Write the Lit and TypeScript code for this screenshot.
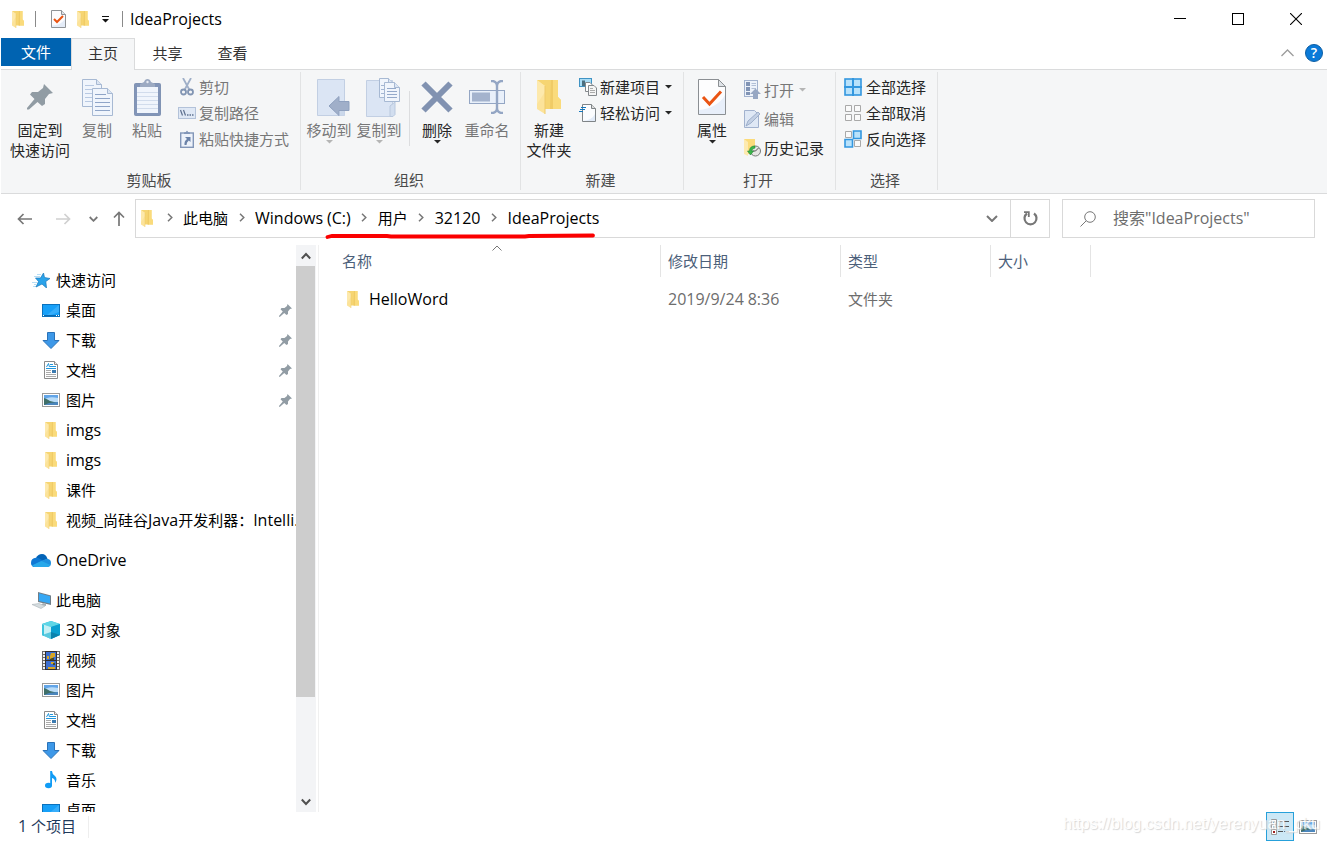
import { LitElement, html, css, svg, TemplateResult } from "lit";
import { customElement, property, state } from "lit/decorators.js";
import { classMap } from "lit/directives/class-map.js";

type Art = { w: number; h: number; box: string; body: unknown };

const folderBody = svg`
  <path d="M0 0H21V17L24 20V29H8L0 20Z" fill="#f6d572"/>
  <path d="M14 0H21V17L24 20V29H14Z" fill="#fadb7c"/>
  <path d="M14 0H16V29H13Z" fill="#f0cb66"/>
  <path d="M0 0L8 6V34L0 29Z" fill="#fce39a"/>
  <path d="M0 0L8 6V12L0 24Z" fill="#fde9ac"/>
  <path d="M8 6V34" stroke="#efca6b" stroke-width="1" fill="none"/>`;

const pinBody = svg`<path d="M17 0L26 9L22 10L18 15V20L15 22L10.5 18L2 25.5H0V24L7.5 15L3 10.5L5 8H11L16 4Z" fill="#919ca4"/>`;

const pictureBody = svg`
  <rect x=".5" y=".5" width="17" height="13" fill="#fff" stroke="#9b9b9b"/>
  <rect x="2" y="2" width="14" height="10" fill="#62a5e8"/>
  <path d="M2 7Q6 3 16 5V9H2Z" fill="#b9dcf8"/>
  <path d="M2 5Q5 6 8 8L16 10V12H2Z" fill="#3f6f68"/>
  <path d="M7 10L16 9V12H2Z" fill="#4b86bd"/>`;

const shortPage = (x: number, y: number, w: number, h: number) => svg`
  <path d="M${x + 0.5} ${y + 0.5}h${w - 6}l5 5v${h - 6}h-${w - 1}z" fill="#f0f5fc" stroke="#a7b9d3"/>
  <path d="M${x + w - 5.5} ${y + 0.5}v5h5" fill="#dbe5f3" stroke="#a7b9d3"/>`;

const art: Record<string, Art> = {
  folder: { w: 12, h: 17, box: "0 0 24 34", body: folderBody },
  folderBig: { w: 24, h: 35, box: "0 0 24 35", body: folderBody },
  pin: { w: 13, h: 13, box: "0 0 26 26", body: pinBody },
  pinBig: { w: 26, h: 26, box: "0 0 26 26", body: pinBody },
  check: {
    w: 15, h: 18, box: "0 0 15 18", body: svg`
      <path d="M.5 .5H10.500L14.500 4.500V17.500H.5Z" fill="#fcfcfe" stroke="#8f9397"/>
      <path d="M14 9V17H1V15.500Q10 15 14 9Z" fill="#e4ecf8"/>
      <path d="M10.500 .5V4.500H14.500" fill="#dfe3e8" stroke="#8f9397"/>
      <path d="M3 9L6 12L12 6" fill="none" stroke="#ea5413" stroke-width="2"/>`,
  },
  checkBig: {
    w: 28, h: 36, box: "0 0 28 36", body: svg`
      <path d="M.5 .5H20.500L27.500 7.500V35.500H.5Z" fill="#fdfdfe" stroke="#8b8f93"/>
      <path d="M27 16V35H1V31C12 30 22 25 27 16Z" fill="#e8effa"/>
      <path d="M20.500 .5V7.500H27.500Z" fill="#dfe3e8" stroke="#8b8f93"/>
      <path d="M5 18L11.500 25L23 12.500" fill="none" stroke="#ea5413" stroke-width="3"/>`,
  },
  picture: { w: 18, h: 14, box: "0 0 18 14", body: pictureBody },
  custom: { w: 7, h: 7, box: "0 0 7 7", body: svg`<path d="M0 0H7V1H0ZM0 3H7L3.500 6.500Z" fill="#111"/>` },
  down: { w: 7, h: 4, box: "0 0 7 4", body: svg`<path d="M0 0H7L3.500 3.500Z" fill="currentColor"/>` },
  min: { w: 12, h: 12, box: "0 0 12 12", body: svg`<path d="M0 5.500H12" stroke="#000"/>` },
  max: { w: 12, h: 12, box: "0 0 12 12", body: svg`<rect x=".5" y=".5" width="11" height="11" fill="none" stroke="#000"/>` },
  close: { w: 12, h: 12, box: "0 0 12 12", body: svg`<path d="M0 0L12 12M12 0L0 12" stroke="#000" stroke-width="1.100"/>` },
  collapse: { w: 13, h: 8, box: "0 0 13 8", body: svg`<path d="M.5 7L6.500 1L12.500 7" stroke="#9c9c9c" stroke-width="1.300" fill="none"/>` },
  copy: {
    w: 31, h: 37, box: "0 0 31 37", body: svg`${shortPage(0, 0, 20, 28)}
      <path d="M3 6.500H12M3 10.500H11M3 14.500H10M3 18.500H10M3 22.500H10" stroke="#b8c9e2"/>
      ${shortPage(10, 9, 21, 28)}
      <path d="M13 15.500H24M13 19.500H28M13 23.500H28M13 27.500H28M13 31.500H28" stroke="#8fa5c8"/>`,
  },
  paste: {
    w: 27, h: 37, box: "0 0 27 37", body: svg`
      <rect x=".5" y="4.500" width="26" height="32" rx="1" fill="#8295b8" stroke="#8093b3"/>
      <rect x="3" y="8" width="21" height="26" fill="#f0f5fc"/>
      <path d="M3 13.500H24M3 17.500H24M3 21.500H24M3 25.500H24M3 29.500H24" stroke="#d1dcec"/>
      <path d="M6 8V5L10 3Q11 0 13.500 0T17 3L21 5V8Z" fill="#9caac2"/>
      <circle cx="13.500" cy="3" r="1.200" fill="#e6ebf3"/>`,
  },
  cut: {
    w: 14, h: 18, box: "0 0 14 18", body: svg`
      <path d="M3 0L9.500 12M11 0L4.500 12" stroke="#9fafc8" stroke-width="1.800" fill="none"/>
      <circle cx="3.500" cy="14" r="2.500" fill="none" stroke="#8295b3" stroke-width="1.800"/>
      <circle cx="10.500" cy="14" r="2.500" fill="none" stroke="#8295b3" stroke-width="1.800"/>`,
  },
  path: {
    w: 18, h: 12, box: "0 0 18 12", body: svg`
      <rect x=".5" y=".5" width="17" height="11" fill="#dfe8f5" stroke="#b3c2d9"/>
      <path d="M2.500 3L4.500 8.500M5.500 3L7.500 8.500" stroke="#5f7190" stroke-width="1.200"/>
      <path d="M9 8H10.500M11.500 8H13M14 8H15.500" stroke="#5f7190" stroke-width="1.500"/>`,
  },
  shortcut: {
    w: 14, h: 18, box: "0 0 14 18", body: svg`
      <rect x=".7" y="3" width="12.600" height="14.300" fill="#edf2fa" stroke="#8296b8" stroke-width="1.400"/>
      <path d="M4 4V2.500L6 2Q7 -.5 8 2L10 2.500V4Z" fill="#8296b8"/>
      <path d="M5 7H10.500V12L8.800 10.500Q6.500 12 6.500 15H4.500Q4 11 7 9Z" fill="#6b82a8"/>`,
  },
  move: {
    w: 41, h: 37, box: "-8 0 41 37", body: svg`
      <path d="M.5 .5H27.500V36.500H.5Z" fill="#dbe5f4" stroke="#c2cfe3"/>
      <path d="M27.500 21V36.500H23Q23 24 27.500 21Z" fill="#cbd8eb"/>
      <path d="M12 27L22 17.500V22.500H32V31.500H22V36.500Z" fill="#a0afc9" stroke="#8fa1bf"/>`,
  },
  copyto: {
    w: 42, h: 39, box: "-8 0 42 39", body: svg`
      <path d="M.5 2.500H26.500V38.500H.5Z" fill="#dbe5f4" stroke="#c2cfe3"/>
      <path d="M24 38.500V28L29 24V36.500L27 38.500Z" fill="#d2deef" stroke="#b9c8de"/>
      ${shortPage(13, 0, 15, 20)}<path d="M15 7.500H20M15 11.500H20M15 15.500H20" stroke="#a4b7d4"/>
      ${shortPage(18, 4, 16, 20)}<path d="M21 10.500H30M21 13.500H31M21 16.500H31M21 19.500H31" stroke="#94a9ca"/>`,
  },
  delete: { w: 32, h: 32, box: "0 0 32 32", body: svg`<path d="M2.500 2.500L29.500 29.500M29.500 2.500L2.500 29.500" stroke="#8192b1" stroke-width="6"/>` },
  rename: {
    w: 36, h: 34, box: "0 0 36 34", body: svg`
      <rect x=".5" y="10.500" width="35" height="13" fill="#e9f0fa" stroke="#94a6c4"/>
      <rect x="3" y="12.500" width="18" height="9" fill="#a4b3cd"/>
      <path d="M22 1H24Q28 2 28 6Q28 2 32 1H34M22 33H24Q28 32 28 28Q28 32 32 33H34M28 5V29" fill="none" stroke="#94a6c4" stroke-width="2.400"/>`,
  },
  newitem: {
    w: 18, h: 18, box: "0 0 18 18", body: svg`
      <rect x=".5" y=".5" width="12" height="8" fill="#a9dcf5" stroke="#3f93c4"/>
      <path d="M3 2.500H6V8H3Z" fill="#4c6f80"/>
      <path d="M6.500 4.500H11L13.500 7V13.500H6.500Z" fill="#fff" stroke="#85898d"/>
      <path d="M9.500 7.500H15L17.500 10V17.500H9.500Z" fill="#f5f5f5" stroke="#85898d"/>
      <path d="M11 10.500H14M11 12.500H16M11 14.500H16" stroke="#aaa"/>`,
  },
  easy: {
    w: 18, h: 18, box: "0 0 18 18", body: svg`
      <path d="M3.500 .5H12.500L16.500 4.500V17.500H3.500Z" fill="#fbfcfe" stroke="#7f8487"/>
      <path d="M12.500 .5V4.500H16.500" fill="#ddd" stroke="#7f8487"/>
      <path d="M16 10V17H4Q13 16 16 10Z" fill="#e2ebf8"/>
      <path d="M2 3.500H7M1 5.500H6M0 7.500H4" stroke="#1377bd"/>`,
  },
  open: {
    w: 17, h: 19, box: "0 0 17 19", body: svg`
      <rect x=".5" y=".5" width="13" height="16" fill="#edf2fa" stroke="#a2b2ce"/>
      <path d="M2 2H6V6H2ZM2 7H6V11H2ZM2 12H6V15H2Z" fill="#8194b5"/>
      <path d="M7.500 3.500H12M7.500 5.500H12M7.500 8.500H12" stroke="#b1bfd6"/>
      <path d="M11.500 8.500L17 14H14V19H9V14H6Z" fill="#97a7c3"/>`,
  },
  edit: {
    w: 17, h: 18, box: "0 0 17 18", body: svg`
      <path d="M.5 .5H10.500L14.500 4.500V17.500H.5Z" fill="#dfe8f5" stroke="#a2b2ce"/>
      <path d="M2 16L4 11L14 2L16 4L7 13Z" fill="#c3d0e4" stroke="#92a5c3" stroke-width=".8"/>`,
  },
  history: {
    w: 17, h: 18, box: "0 0 17 18", body: svg`
      <path d="M0 0H11V15H4L0 12Z" fill="#fbdb7a"/><path d="M0 0L4 3V17L0 15Z" fill="#fdeab0"/>
      <circle cx="11.500" cy="12" r="5" fill="#e6e6e3" stroke="#777b78"/>
      <path d="M11.500 12L14.500 9M11.500 12H8.500" stroke="#555"/>
      <path d="M11 7Q5.500 7 5.500 12H3.500L6.500 16L9.500 12H7.500Q8 9.500 11 9Z" fill="#3db54a" stroke="#218a32" stroke-width=".6"/>`,
  },
  selAll: {
    w: 18, h: 18, box: "0 0 18 18", body: svg`
      <rect x="1" y="1" width="16" height="16" fill="#b9e2fb" stroke="#3397df" stroke-width="1.600"/>
      <path d="M9 0V18M0 9H18" stroke="#3397df" stroke-width="2"/>`,
  },
  selNone: {
    w: 18, h: 18, box: "0 0 18 18", body: svg`
      <path d="M1.500 1.500H7.500V7.500H1.500ZM10.500 1.500H16.500V7.500H10.500ZM1.500 10.500H7.500V16.500H1.500ZM10.500 10.500H16.500V16.500H10.500Z" fill="#fafafa" stroke="#a9a9a9"/>`,
  },
  selInv: {
    w: 18, h: 18, box: "0 0 18 18", body: svg`
      <path d="M1.500 1.500H7.500V7.500H1.500ZM10.500 10.500H16.500V16.500H10.500Z" fill="#fafafa" stroke="#a9a9a9"/>
      <path d="M9.500 1H17V8.500H9.500ZM1 9.500H8.500V17H1Z" fill="#b9e2fb" stroke="#3397df" stroke-width="1.600"/>`,
  },
  back: { w: 15, h: 12, box: "0 0 15 12", body: svg`<path d="M15 6H1.500M6.500 1L1.500 6L6.500 11" stroke="#777" stroke-width="1.700" fill="none"/>` },
  forward: { w: 15, h: 12, box: "0 0 15 12", body: svg`<path d="M0 6H13.500M8.500 1L13.500 6L8.500 11" stroke="#d0d0d0" stroke-width="1.700" fill="none"/>` },
  recent: { w: 9, h: 6, box: "0 0 9 6", body: svg`<path d="M.7 1L4.500 4.800L8.300 1" stroke="#777" stroke-width="1.800" fill="none"/>` },
  up: { w: 12, h: 15, box: "0 0 12 15", body: svg`<path d="M6 15V1.500M1 6.500L6 1.500L11 6.500" stroke="#777" stroke-width="1.700" fill="none"/>` },
  crumb: { w: 6, h: 9, box: "0 0 6 9", body: svg`<path d="M1 .7L4.800 4.500L1 8.300" stroke="#777" stroke-width="1.500" fill="none"/>` },
  drop: { w: 12, h: 7, box: "0 0 12 7", body: svg`<path d="M1 1L6 6L11 1" stroke="#777" stroke-width="2" fill="none"/>` },
  refresh: {
    w: 15, h: 15, box: "0 0 15 15", body: svg`
      <path d="M11 2.500A6 6 0 1 1 4 2.500" stroke="#777" stroke-width="2.200" fill="none"/>
      <path d="M1 1.200H5.800V6" stroke="#777" stroke-width="1.800" fill="none"/>`,
  },
  search: {
    w: 16, h: 16, box: "0 0 16 16", body: svg`
      <circle cx="10" cy="6" r="5.300" stroke="#777" fill="none"/><path d="M6.200 9.800L.5 15.500" stroke="#777"/>`,
  },
  scrollUp: { w: 10, h: 8, box: "0 0 10 8", body: svg`<path d="M.8 6.500L5 2L9.200 6.500" stroke="#505050" stroke-width="2" fill="none"/>` },
  scrollDown: { w: 10, h: 8, box: "0 0 10 8", body: svg`<path d="M.8 1.500L5 6L9.200 1.500" stroke="#505050" stroke-width="2" fill="none"/>` },
  sort: { w: 10, h: 6, box: "0 0 10 6", body: svg`<path d="M.5 5.500L5 1L9.500 5.500" stroke="#777" fill="none"/>` },
  star: {
    w: 18, h: 15, box: "0 0 18 15", body: svg`
      <path d="M5 1.500H9M2 3.500H8M0 9.500H5M2 11.500H4M1 13.500H4" stroke="#a5d5f2" stroke-width=".8"/>
      <path d="M11.500 0L12.500 4.500L18 5.500L13.800 8.500L14.500 15L10 11L4 14L6.500 8.500L3.500 5L8.500 5Z" fill="#2aa3ea" stroke="#1877ba" stroke-width=".7"/>`,
  },
  desktop: {
    w: 18, h: 13, box: "0 0 18 13", body: svg`
      <rect x=".5" y=".5" width="17" height="12" fill="#17a0f8" stroke="#0b72bd"/>
      <path d="M17 1V8L9 11H5Z" fill="#37aefb"/>
      <path d="M1 11H17V12H1Z" fill="#0869b0"/><path d="M1 11.500H2M14 11.500H15M16 11.500H17" stroke="#fff"/>`,
  },
  download: { w: 18, h: 17, box: "0 0 18 17", body: svg`<path d="M5.500 .5H12.500V8.500H17L9 16.500L1 8.500H5.500Z" fill="#3d98e8" stroke="#2a72b8"/>` },
  document: {
    w: 14, h: 18, box: "0 0 14 18", body: svg`
      <path d="M.5 .5H10.500L13.500 3.500V17.500H.5Z" fill="#fff" stroke="#8a8a8a"/>
      <path d="M10.500 .5V3.500H13.500" fill="#eee" stroke="#8a8a8a"/>
      <path d="M2.500 6L4.500 2.500L5.500 6M6 3.500H9M6 5.500H12M2 7.500H12" stroke="#2196dc" fill="none"/>
      <path d="M8 9H12V12H8Z" fill="#3c7ab0"/><path d="M2 9.500H7M2 11.500H7M2 13.500H12M2 15.500H12" stroke="#aaa"/>`,
  },
  onedrive: {
    w: 20, h: 13, box: "0 0 20 13", body: svg`
      <path d="M5 4Q7 0 11 0T16.500 5L9 8Z" fill="#0364b8"/>
      <path d="M0 9Q0 4 5 3.700Q8 3.500 12 7L3 13Q0 12 0 9Z" fill="#0f78d4"/>
      <path d="M16 4.800Q20 5.200 20 9Q20 13 16 13H3.500Q1.500 12.500 1 11.500L11 6.500Z" fill="#1e90df"/>
      <path d="M1 11.500L10.500 7L19.500 11Q18 13 16 13H3.500Z" fill="#28a8ea"/>`,
  },
  computer: {
    w: 19, h: 17, box: "0 0 19 17", body: svg`
      <path d="M6 0L19 3.500V13L6 10Z" fill="#6f7d88"/><path d="M7 1.200L18 4.300V11.500L7 9Z" fill="#36a8f5"/>
      <path d="M11 11L14 12V14L9 13Z" fill="#a5afb5"/>
      <path d="M0 12.500L7 11.500L13 14L9 16.500Z" fill="#d5dcdf" stroke="#aab4b9" stroke-width=".6"/>`,
  },
  cube: {
    w: 18, h: 18, box: "0 0 18 18", body: svg`
      <path d="M9 0L18 3V14L9 18L0 14V3Z" fill="#27b5d8"/><path d="M0 3L9 0L18 3L9 6Z" fill="#5ed6e6"/>
      <path d="M0 3L9 6V18L0 14Z" fill="#c5f0f5"/><path d="M9 6L18 3V14L9 18Z" fill="#0a9fd0"/>
      <path d="M0 14L9 11V18Z" fill="#2cb8d6" opacity=".7"/><path d="M9 11L18 14L9 18Z" fill="#0b6f96" opacity=".6"/>
      <path d="M0 3L2 4V15L0 14Z" fill="#3cc4dd"/>`,
  },
  video: {
    w: 18, h: 19, box: "0 0 18 19", body: svg`
      <path d="M0 0H18V19H0Z" fill="#6d6967"/>
      <path d="M2 1V19M16 1V19" stroke="#f2f2f2" stroke-width="2" stroke-dasharray="2 1"/>
      <path d="M3 0H15V19H3Z" fill="#33302f"/>
      <path d="M4 1H14V9H4ZM4 10H14V18H4Z" fill="#3d6fd0"/>
      <path d="M9 2H13V6H11V8H8V5ZM5 5H7V8H5ZM9 11H12V13H9ZM6 16H13V18H6Z" fill="#d7a625"/>
      <path d="M10 7H12V9H8V8ZM11 12H13V14H11Z" fill="#4a4a26"/>`,
  },
  music: {
    w: 12, h: 18, box: "0 0 12 18", body: svg`
      <ellipse cx="3.500" cy="14.500" rx="3.500" ry="2.800" fill="#119cf5"/>
      <path d="M5.200 0H7Q7 3 10 5Q13 8 10 12Q10.500 8 7 7V14.500H5.200Z" fill="#119cf5"/>`,
  },
  details: {
    w: 18, h: 16, box: "0 0 18 16", body: svg`
      <path d="M.5 .5H5.500V15.500H.5ZM.5 5.500H5.500M.5 10.500H5.500" fill="#fff" stroke="#999"/>
      <path d="M2 2H4V4H2ZM2 7H4V9H2Z" fill="#587486"/><path d="M2 12H4V14H2Z" fill="#a02020"/>
      <path d="M7 2.500H12M13 2.500H18M7 7.500H12M13 7.500H18M7 12.500H12M13 12.500H18" stroke="#555"/>`,
  },
};

const icon = (name: string): TemplateResult => {
  const a = art[name];
  return html`<svg class="icon" width=${a.w} height=${a.h} viewBox=${a.box} aria-hidden="true">${a.body}</svg>`;
};

/** Splits a label so that its Latin runs take the slightly larger Latin size. */
const label = (text: string) =>
  text.split(/([\x21-\x7e]+)/).map((part) => (/^[\x21-\x7e]/.test(part) ? html`<span class="latin">${part}</span>` : part));

interface NavItem { icon: string; text: string; root?: boolean; pinned?: boolean; gap?: boolean }

const navItems: NavItem[] = [
  { icon: "star", text: "快速访问", root: true },
  { icon: "desktop", text: "桌面", pinned: true },
  { icon: "download", text: "下载", pinned: true },
  { icon: "document", text: "文档", pinned: true },
  { icon: "picture", text: "图片", pinned: true },
  { icon: "folder", text: "imgs" },
  { icon: "folder", text: "imgs" },
  { icon: "folder", text: "课件" },
  { icon: "folder", text: "视频_尚硅谷Java开发利器：Intelli." },
  { icon: "onedrive", text: "OneDrive", root: true, gap: true },
  { icon: "computer", text: "此电脑", root: true, gap: true },
  { icon: "cube", text: "3D 对象" },
  { icon: "video", text: "视频" },
  { icon: "picture", text: "图片" },
  { icon: "document", text: "文档" },
  { icon: "download", text: "下载" },
  { icon: "music", text: "音乐" },
  { icon: "desktop", text: "桌面" },
];

const shared = css`
  :host { font-family: "Open Sans", "Noto Sans CJK SC", sans-serif; font-size: 15px; line-height: 20px; }
  * { box-sizing: border-box; }
  .latin { font-size: 16px; }
  .icon { display: block; flex: none; }
  button { font: inherit; color: inherit; background: none; border: 0; padding: 0; margin: 0; }
`;

@customElement("ribbon-bar")
class RibbonBar extends LitElement {
  static styles = [shared, css`
    :host { display: flex; background: #f5f6f7; border-bottom: 1px solid #dadbdc; padding: 2px 0 3px; color: #262626; overflow: hidden; }
    .group { display: flex; flex-direction: column; flex: none; border-right: 1px solid #e2e3e4; }
    .tools { display: flex; height: 98px; padding: 2px 11px 0 3px; }
    .clipboard { padding-left: 7px; }
    .organize { padding-right: 8px; }
    .select { padding-left: 8px; }
    .caption { text-align: center; padding-right: 3px; color: #4a4a4a; }
    .big { width: 50px; display: flex; flex-direction: column; align-items: center; white-space: nowrap; }
    .wide { width: 64px; }
    .art { height: 46px; display: flex; align-items: center; }
    .small { display: flex; align-items: center; height: 26px; gap: 3px; white-space: nowrap; }
    .glyph { width: 18px; display: flex; justify-content: center; }
    .small > .icon { margin-left: 2px; }
    .list { display: flex; flex-direction: column; margin-left: 6px; }
    .new .list { margin-left: 5px; }
    .select .list { margin-left: 0; }
    .select .small { gap: 4px; }
    .loose { padding-top: 1px; }
    .loose .small { height: 29px; }
    button:disabled { color: #777; }
    button:disabled > .icon { color: #b5b5b5; }
    .rule { width: 1px; height: 55px; margin: 17px 2px 0 5px; background: #dcdddf; }
  `];

  private big(name: string, lines: string[], opts: { off?: boolean; menu?: boolean; wide?: boolean } = {}) {
    return html`<button class=${classMap({ big: true, wide: !!opts.wide })} ?disabled=${!!opts.off}>
      <span class="art">${icon(name)}</span>${lines.map((l) => html`<span>${l}</span>`)}${opts.menu ? icon("down") : ""}
    </button>`;
  }

  private small(name: string, text: string, opts: { off?: boolean; menu?: boolean } = {}) {
    return html`<button class="small" ?disabled=${!!opts.off}>
      <span class="glyph">${icon(name)}</span><span>${text}</span>${opts.menu ? icon("down") : ""}
    </button>`;
  }

  render() {
    return html`
      <div class="group">
        <div class="tools clipboard">
          ${this.big("pinBig", ["固定到", "快速访问"], { wide: true })}
          ${this.big("copy", ["复制"], { off: true })}
          ${this.big("paste", ["粘贴"], { off: true })}
          <div class="list">
            ${this.small("cut", "剪切", { off: true })}
            ${this.small("path", "复制路径", { off: true })}
            ${this.small("shortcut", "粘贴快捷方式", { off: true })}
          </div>
        </div>
        <div class="caption">剪贴板</div>
      </div>
      <div class="group">
        <div class="tools organize">
          ${this.big("move", ["移动到"], { off: true, menu: true })}
          ${this.big("copyto", ["复制到"], { off: true, menu: true })}
          <div class="rule"></div>
          ${this.big("delete", ["删除"], { menu: true })}
          ${this.big("rename", ["重命名"], { off: true })}
        </div>
        <div class="caption">组织</div>
      </div>
      <div class="group">
        <div class="tools new">
          ${this.big("folderBig", ["新建", "文件夹"])}
          <div class="list">
            ${this.small("newitem", "新建项目", { menu: true })}
            ${this.small("easy", "轻松访问", { menu: true })}
          </div>
        </div>
        <div class="caption">新建</div>
      </div>
      <div class="group">
        <div class="tools">
          ${this.big("checkBig", ["属性"], { menu: true })}
          <div class="list loose">
            ${this.small("open", "打开", { off: true, menu: true })}
            ${this.small("edit", "编辑", { off: true })}
            ${this.small("history", "历史记录")}
          </div>
        </div>
        <div class="caption">打开</div>
      </div>
      <div class="group">
        <div class="tools select">
          <div class="list">
            ${this.small("selAll", "全部选择")}
            ${this.small("selNone", "全部取消")}
            ${this.small("selInv", "反向选择")}
          </div>
        </div>
        <div class="caption">选择</div>
      </div>`;
  }
}

@customElement("nav-tree")
class NavTree extends LitElement {
  @property({ attribute: false }) items: NavItem[] = [];

  static styles = [shared, css`
    :host { display: flex; min-height: 0; overflow: hidden; color: #000; }
    .tree { flex: 1; min-width: 0; overflow: hidden; padding: 20px 0 0 30px; margin: 0; list-style: none; }
    .row a { display: flex; align-items: center; height: 30px; padding-left: 10px; color: inherit; text-decoration: none; white-space: nowrap; }
    .root a { padding-left: 0; }
    .gap { margin-top: 10px; }
    .glyph { width: 20px; margin-right: 5px; display: flex; justify-content: center; flex: none; }
    .text { flex: 1; min-width: 0; }
    .pin { padding-right: 4px; }
    .bar { width: 20px; display: flex; flex-direction: column; background: #f3f4f6; }
    .arrow { height: 21px; display: flex; align-items: center; justify-content: center; }
    .track { flex: 1; padding-right: 1px; }
    .thumb { height: 82%; background: #cdcdcd; }
  `];

  render() {
    return html`
      <ul class="tree">
        ${this.items.map((i) => html`
          <li class=${classMap({ row: true, root: !!i.root, gap: !!i.gap })}>
            <a href="#"><span class="glyph">${icon(i.icon)}</span><span class="text">${label(i.text)}</span>${i.pinned ? html`<span class="pin">${icon("pin")}</span>` : ""}</a>
          </li>`)}
      </ul>
      <div class="bar">
        <button class="arrow" aria-label="向上">${icon("scrollUp")}</button>
        <div class="track"><div class="thumb"></div></div>
        <button class="arrow" aria-label="向下">${icon("scrollDown")}</button>
      </div>`;
  }
}

@customElement("app-root")
class AppRoot extends LitElement {
  @state() private tab = "主页";

  static styles = [shared, css`
    :host { display: flex; flex-direction: column; height: 100vh; background: #fff; padding: 0 1px; overflow: hidden; color: #000; position: relative; }
    .title { display: flex; align-items: center; height: 38px; padding: 0 2px 0 11px; }
    .quick { display: flex; align-items: center; height: 18px; }
    .bar { width: 1px; height: 16px; background: #8a8a8a; }
    .q1 { margin: 0 15px 0 11px; }
    .q2 { margin: 0 7px 0 13px; }
    .quick .f2 { margin: 0 13px 0 11px; }
    .heading { flex: 1; margin: 0; font-size: 16px; font-weight: 400; }
    .win { width: 58px; height: 38px; display: flex; align-items: center; justify-content: center; }
    .tabs { display: flex; height: 32px; border-bottom: 1px solid #dadbdc; color: #333; }
    .tab { width: 65px; height: 30px; padding-bottom: 2px; border: 1px solid transparent; border-bottom: 0; }
    .file { width: 70px; height: 28px; background: #0063b1; color: #fff; }
    .on { width: 64px; height: 32px; padding-bottom: 4px; background: #f5f6f7; border-color: #dadbdc; }
    .help { margin-left: auto; display: flex; align-items: center; gap: 11px; padding-right: 4px; height: 30px; }
    .q { width: 18px; height: 18px; border-radius: 50%; border: 1px solid #0d5ea3; background: #0b7ad8; color: #fff; font-size: 14px; line-height: 16px; font-weight: 600; }
    .address { display: flex; align-items: center; padding: 5px 12px 7px 16px; }
    .nav { display: flex; align-items: center; width: 118px; flex: none; }
    .nav button { display: flex; }
    .fwd { margin: 0 18px 0 24px; }
    .up { margin-left: 15px; }
    .path { flex: 1; min-width: 0; display: flex; align-items: center; height: 39px; border: 1px solid #d9d9d9; padding-left: 5px; position: relative; }
    .crumbs { flex: 1; display: flex; align-items: center; list-style: none; margin: 0; padding: 0 0 2px 3px; white-space: nowrap; overflow: hidden; }
    .crumbs li { display: flex; align-items: center; }
    .crumbs a { color: inherit; text-decoration: none; }
    .sep { width: 27px; display: flex; justify-content: center; }
    .drop { width: 36px; display: flex; justify-content: center; }
    .refresh { width: 39px; height: 37px; border-left: 1px solid #d9d9d9; display: flex; align-items: center; justify-content: center; }
    .mark { position: absolute; left: 189px; bottom: -2px; }
    .search { width: 253px; height: 39px; margin-left: 12px; border: 1px solid #d9d9d9; display: flex; align-items: center; padding-left: 17px; gap: 17px; }
    .search input { flex: 1; min-width: 0; border: 0; outline: 0; padding: 0 0 2px; font: inherit; font-size: 16px; background: none; }
    .search input::placeholder { color: #6d6d6d; opacity: 1; }
    .body { flex: 1; min-height: 0; display: grid; grid-template-columns: 315px 1fr; }
    .main { margin-left: 2px; border-left: 1px solid #f0f0f0; position: relative; }
    .files { border-collapse: separate; border-spacing: 0; table-layout: fixed; width: 772px; text-align: left; color: #6d6d6d; }
    .files th { height: 32px; font-weight: 400; color: #4c607a; padding: 0 0 0 7px; border-right: 1px solid #e4e4e4; }
    .files th:first-child { padding-left: 23px; }
    .c1 { width: 342px; } .c2 { width: 180px; } .c3 { width: 150px; } .c4 { width: 100px; }
    .files td { padding: 7px 0 0 7px; height: 37px; }
    .files td:first-child { padding-left: 28px; color: #000; }
    .name { display: flex; align-items: center; gap: 10px; }
    .sort { position: absolute; left: 173px; top: 0; }
    .status { height: 30px; display: flex; align-items: center; padding: 0 5px 0 17px; color: #1e395b; }
    .count { padding: 0 12px 2px 0; border-right: 1px solid #eee; }
    .views { margin-left: auto; display: flex; align-items: center; }
    .view { width: 28px; height: 29px; display: flex; align-items: center; justify-content: center; margin-bottom: 1px; }
    .picked { background: #cce8f6; border: 1px solid #26a0da; }
    .watermark { position: absolute; right: 8px; bottom: 8px; font-family: "Liberation Sans", sans-serif; font-size: 16px; color: #fff; text-shadow: 1px 1px 1px #ccc; pointer-events: none; opacity: .8; }
  `];

  render() {
    const crumbs = ["此电脑", "Windows (C:)", "用户", "32120", "IdeaProjects"];
    return html`
      <header class="title">
        <div class="quick">
          ${icon("folder")}<span class="bar q1"></span>
          ${icon("check")}<span class="f2">${icon("folder")}</span>${icon("custom")}
          <span class="bar q2"></span>
        </div>
        <h1 class="heading">IdeaProjects</h1>
        <button class="win" aria-label="最小化">${icon("min")}</button>
        <button class="win" aria-label="最大化">${icon("max")}</button>
        <button class="win" aria-label="关闭">${icon("close")}</button>
      </header>
      <nav class="tabs">
        <button class="tab file">文件</button>
        ${["主页", "共享", "查看"].map((t) => html`<button class=${classMap({ tab: true, on: t === this.tab })} @click=${() => (this.tab = t)}>${t}</button>`)}
        <div class="help"><button aria-label="折叠功能区">${icon("collapse")}</button><button class="q">?</button></div>
      </nav>
      <ribbon-bar></ribbon-bar>
      <div class="address">
        <div class="nav">
          <button aria-label="后退">${icon("back")}</button>
          <button class="fwd" aria-label="前进" disabled>${icon("forward")}</button>
          <button aria-label="最近位置">${icon("recent")}</button>
          <button class="up" aria-label="上移">${icon("up")}</button>
        </div>
        <div class="path">
          ${icon("folder")}
          <ol class="crumbs">
            ${crumbs.map((c) => html`<li><span class="sep">${icon("crumb")}</span><a href="#">${label(c)}</a></li>`)}
          </ol>
          <button class="drop" aria-label="以前的位置">${icon("drop")}</button>
          <button class="refresh" aria-label="刷新">${icon("refresh")}</button>
          <svg class="mark" width="272" height="6" viewBox="0 0 272 6" aria-hidden="true">
            <path d="M2.500 4L7 3H62L66 3.500H200L204 3L268 2.500" fill="none" stroke="#fb0000" stroke-width="3.800" stroke-linecap="round"/>
          </svg>
        </div>
        <label class="search">${icon("search")}<input type="search" placeholder='搜索"IdeaProjects"' aria-label="搜索" /></label>
      </div>
      <div class="body">
        <nav-tree .items=${navItems}></nav-tree>
        <main class="main">
          <span class="sort">${icon("sort")}</span>
          <table class="files">
            <colgroup><col class="c1" /><col class="c2" /><col class="c3" /><col class="c4" /></colgroup>
            <thead><tr><th>名称</th><th>修改日期</th><th>类型</th><th>大小</th></tr></thead>
            <tbody><tr>
              <td><span class="name">${icon("folder")}${label("HelloWord")}</span></td>
              <td>${label("2019/9/24 8:36")}</td><td>文件夹</td><td></td>
            </tr></tbody>
          </table>
        </main>
      </div>
      <footer class="status">
        <span class="count">${label("1 个项目")}</span>
        <div class="views">
          <button class="view picked" aria-label="详细信息">${icon("details")}</button>
          <button class="view" aria-label="大图标">${icon("picture")}</button>
        </div>
      </footer>
      <div class="watermark">https://blog.csdn.net/yerenyuan_pku</div>`;
  }
}
